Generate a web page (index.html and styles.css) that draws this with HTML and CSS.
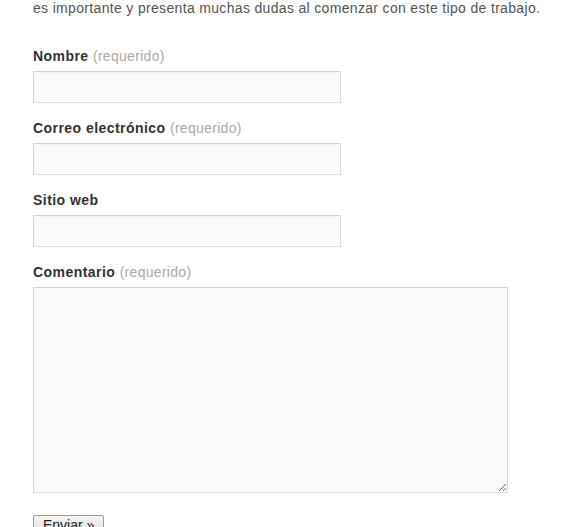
FILE: index.html
```html
<!DOCTYPE html>
<html lang="es">
<head>
<meta charset="utf-8">
<title>Comentario</title>
<link rel="stylesheet" href="styles.css">
</head>
<body>
<div class="content">
  <p class="intro">es importante y presenta muchas dudas al comenzar con este tipo de trabajo.</p>
  <form class="comment-form">
    <div class="field">
      <label class="label">Nombre <span class="req">(requerido)</span></label>
      <input class="input" type="text">
    </div>
    <div class="field">
      <label class="label">Correo electrónico <span class="req">(requerido)</span></label>
      <input class="input" type="text">
    </div>
    <div class="field">
      <label class="label">Sitio web</label>
      <input class="input" type="text">
    </div>
    <div class="field">
      <label class="label">Comentario <span class="req">(requerido)</span></label>
      <textarea class="textarea"></textarea>
    </div>
    <div class="actions">
      <button class="button" type="button">Enviar »</button>
    </div>
  </form>
</div>
</body>
</html>
```

FILE: styles.css
```css
html, body {
  margin: 0;
  padding: 0;
  background: #fff;
}
body {
  font-family: "Liberation Sans", Arial, sans-serif;
  color: #555;
  overflow: hidden;
}
.content {
  padding-left: 33px;
}
.intro {
  margin: 0;
  font-size: 14px;
  line-height: 16px;
  color: #555;
  letter-spacing: 0.33px;
  white-space: nowrap;
}
.comment-form {
  margin-top: 28px;
}
.field {
  display: flex;
  flex-direction: column;
  align-items: flex-start;
  margin-bottom: 13px;
}
.label {
  display: block;
  font-size: 14px;
  line-height: 22px;
  padding-top: 1px;
  font-weight: bold;
  color: #333;
  margin-bottom: 4px;
  letter-spacing: 0.45px;
}
.req {
  font-weight: normal;
  color: #aaa;
  letter-spacing: 0.3px;
}
.input {
  box-sizing: border-box;
  width: 308px;
  height: 32px;
  margin: 0;
  padding: 4px 6px;
  background: #fafafa;
  border: 1px solid #ddd;
  border-top-color: #d4d4d4;
  border-left-color: #d4d4d4;
  border-radius: 0;
  box-shadow: inset 1px 1px 1px rgba(0,0,0,0.03);
  font: 14px "Liberation Sans", Arial, sans-serif;
}
.textarea {
  box-sizing: border-box;
  width: 475px;
  height: 206px;
  margin: 0;
  padding: 4px 6px;
  background: #fafafa;
  border: 1px solid #ddd;
  border-top-color: #d4d4d4;
  border-left-color: #d4d4d4;
  border-radius: 0;
  font: 14px "Liberation Sans", Arial, sans-serif;
}
.actions {
  margin-top: 22px;
}
.button {
  margin: 0;
  padding: 1px 9px 3px;
  font: 14px/16px "Liberation Sans", Arial, sans-serif;
  color: #222;
  background: linear-gradient(#f4f4f4, #dcdcdc);
  border: 1px solid #999;
  border-radius: 2px;
}
```
